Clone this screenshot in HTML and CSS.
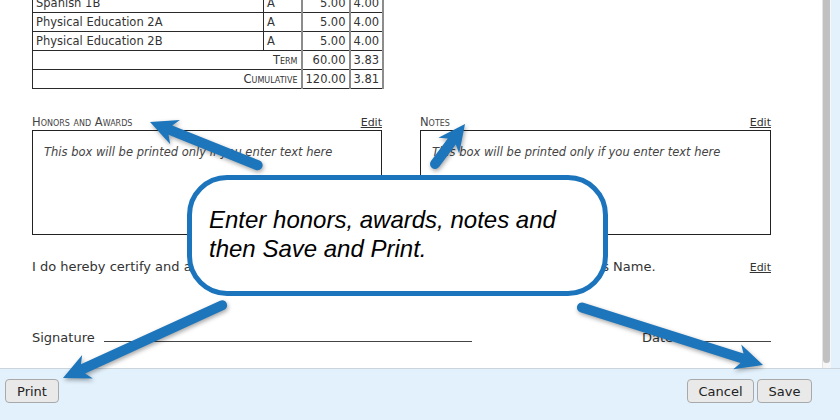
FILE: index.html
```html
<!DOCTYPE html>
<html lang="en">
<head>
<meta charset="utf-8">
<title>Transcript</title>
<link rel="stylesheet" href="styles.css">
</head>
<body>
<div class="page">
  <div class="panel">
    <div class="content">
      <table class="grades">
        <colgroup><col class="c1"><col class="c2"><col class="c3"><col class="c4"></colgroup>
        <tr><td>Spanish 1B</td><td class="grade">A</td><td class="num">5.00</td><td class="num">4.00</td></tr>
        <tr><td>Physical Education 2A</td><td class="grade">A</td><td class="num">5.00</td><td class="num">4.00</td></tr>
        <tr><td>Physical Education 2B</td><td class="grade">A</td><td class="num">5.00</td><td class="num">4.00</td></tr>
        <tr><td colspan="2" class="label">Term</td><td class="num">60.00</td><td class="num">3.83</td></tr>
        <tr><td colspan="2" class="label">Cumulative</td><td class="num">120.00</td><td class="num">3.81</td></tr>
      </table>

      <div class="boxes">
        <section class="field">
          <div class="field-head"><span class="caps">Honors and Awards</span><a class="edit" href="#">Edit</a></div>
          <div class="field-box">This box will be printed only if you enter text here</div>
        </section>
        <section class="field">
          <div class="field-head"><span class="caps">Notes</span><a class="edit" href="#">Edit</a></div>
          <div class="field-box">This box will be printed only if you enter text here</div>
        </section>
      </div>

      <div class="certify">
        <span>I do hereby certify and affirm that this is the official academic transcript of the Student's Name.</span>
        <a class="edit" href="#">Edit</a>
      </div>

      <div class="sign">
        <span>Signature</span>
        <span class="sig-line"></span>
        <span class="date">Date</span>
        <span class="date-line"></span>
      </div>
    </div>
    <div class="scroll"><div class="thumb"></div></div>
  </div>

  <div class="bar">
    <button class="btn btn-print">Print</button>
    <div class="bar-right">
      <button class="btn btn-cancel">Cancel</button>
      <button class="btn btn-save">Save</button>
    </div>
  </div>

  <div class="callout">Enter honors, awards, notes and<br>then Save and Print.</div>

  <svg class="arrows" width="840" height="420" viewBox="0 0 840 420" aria-hidden="true">
    <g fill="#1d76bb">
      <path transform="translate(150 122) rotate(21.89)" d="M0 0 L27 -13 L22 -5 L116 -5 A5 5 0 0 1 116 5 L22 5 L27 13 Z"/>
      <path transform="translate(465 124) rotate(126.87)" d="M0 0 L27 -13 L22 -5 L50 -5 A5 5 0 0 1 50 5 L22 5 L27 13 Z"/>
      <path transform="translate(63 378) rotate(-24.57)" d="M0 0 L27 -13 L22 -5 L175 -5 A5 5 0 0 1 175 5 L22 5 L27 13 Z"/>
      <path transform="translate(763 365) rotate(-162.4)" d="M0 0 L27 -13 L22 -5 L190 -5 A5 5 0 0 1 190 5 L22 5 L27 13 Z"/>
    </g>
  </svg>
</div>
</body>
</html>
```
FILE: styles.css
```css
html, body {
  margin: 0;
  padding: 0;
}
body {
  background: #e3f1fc;
  font-family: "DejaVu Sans", Verdana, sans-serif;
  color: #333;
}
.page {
  position: relative;
  width: 840px;
  height: 420px;
  overflow: hidden;
}
.panel {
  display: flex;
  width: 831px;
  height: 368px;
  background: #fff;
}
.content {
  flex: 1;
  padding: 0 51px 0 32px;
  overflow: hidden;
}
.scroll {
  width: 8px;
  border-left: 1px solid #e4e4e4;
  background: #f6f6f6;
}
.thumb {
  width: 7px;
  height: 363px;
  background: #c1c1c1;
  border-radius: 0 0 4px 4px;
}

/* grades table */
.grades {
  border-collapse: collapse;
  table-layout: fixed;
  width: 350px;
  margin-top: -7px;
  font-size: 11.5px;
  color: #333;
}
.c1 { width: 231px; }
.c2 { width: 38px; }
.c3 { width: 48px; }
.c4 { width: 33px; }
.grades td {
  border: 1px solid #2a2a2a;
  height: 18px;
  line-height: 18px;
  padding: 0 3px;
  white-space: nowrap;
  overflow: hidden;
}
.grades td.num {
  text-align: right;
  border-left: 2px solid #8c8c8c;
  border-right: 2px solid #8c8c8c;
}
.grades td.label {
  text-align: right;
  font-variant: small-caps;
}

/* honors / notes */
.boxes {
  display: grid;
  grid-template-columns: 350px 351px;
  column-gap: 38px;
  margin-top: 26px;
}
.field-head {
  display: flex;
  justify-content: space-between;
  align-items: baseline;
  height: 14px;
  line-height: 14px;
  margin-bottom: 1px;
}
.caps {
  font-size: 11.5px;
  font-variant: small-caps;
  color: #444;
}
.edit {
  font-size: 11px;
  color: #333;
  text-decoration: underline;
}
.field-box {
  box-sizing: border-box;
  height: 105px;
  border: 1px solid #222;
  padding: 13px 11px 0;
  font-size: 11.5px;
  line-height: 16px;
  font-style: italic;
  color: #444;
}

/* certify + signature */
.certify {
  display: flex;
  justify-content: space-between;
  align-items: baseline;
  margin-top: 23px;
  font-size: 13px;
  line-height: 18px;
}
.certify span {
  white-space: nowrap;
}
.sign {
  display: flex;
  align-items: baseline;
  margin-top: 52px;
  font-size: 13px;
  line-height: 18px;
}
.sig-line {
  width: 368px;
  margin-left: 9px;
  border-bottom: 1px solid #444;
}
.date {
  margin-left: auto;
}
.date-line {
  width: 96px;
  margin-left: 2px;
  border-bottom: 1px solid #444;
}

/* bottom bar */
.bar {
  box-sizing: border-box;
  height: 52px;
  border-top: 1px solid #cbd4da;
  display: flex;
  justify-content: space-between;
  align-items: flex-start;
  padding: 10px 28px 0 5px;
}
.bar-right {
  display: flex;
  gap: 3px;
}
.btn {
  box-sizing: border-box;
  height: 24px;
  padding: 0;
  border: 1px solid #a9a9a9;
  border-radius: 4px;
  background: #e9e9e9;
  font-family: "DejaVu Sans", Verdana, sans-serif;
  font-size: 13px;
  color: #222;
}
.btn-print { width: 54px; }
.btn-cancel { width: 67px; }
.btn-save { width: 55px; }

/* overlay callout + arrows */
.callout {
  position: absolute;
  left: 187px;
  top: 175px;
  width: 421px;
  height: 121px;
  box-sizing: border-box;
  border: 5px solid #1c75bc;
  border-radius: 40px;
  background: #fff;
  padding: 25px 0 0 17px;
  font-family: "Liberation Sans", Arial, sans-serif;
  font-style: italic;
  font-size: 24px;
  line-height: 29px;
  color: #000;
}
.arrows {
  position: absolute;
  left: 0;
  top: 0;
  pointer-events: none;
  filter: drop-shadow(1px 2px 2px rgba(0, 0, 0, 0.35));
}
```
